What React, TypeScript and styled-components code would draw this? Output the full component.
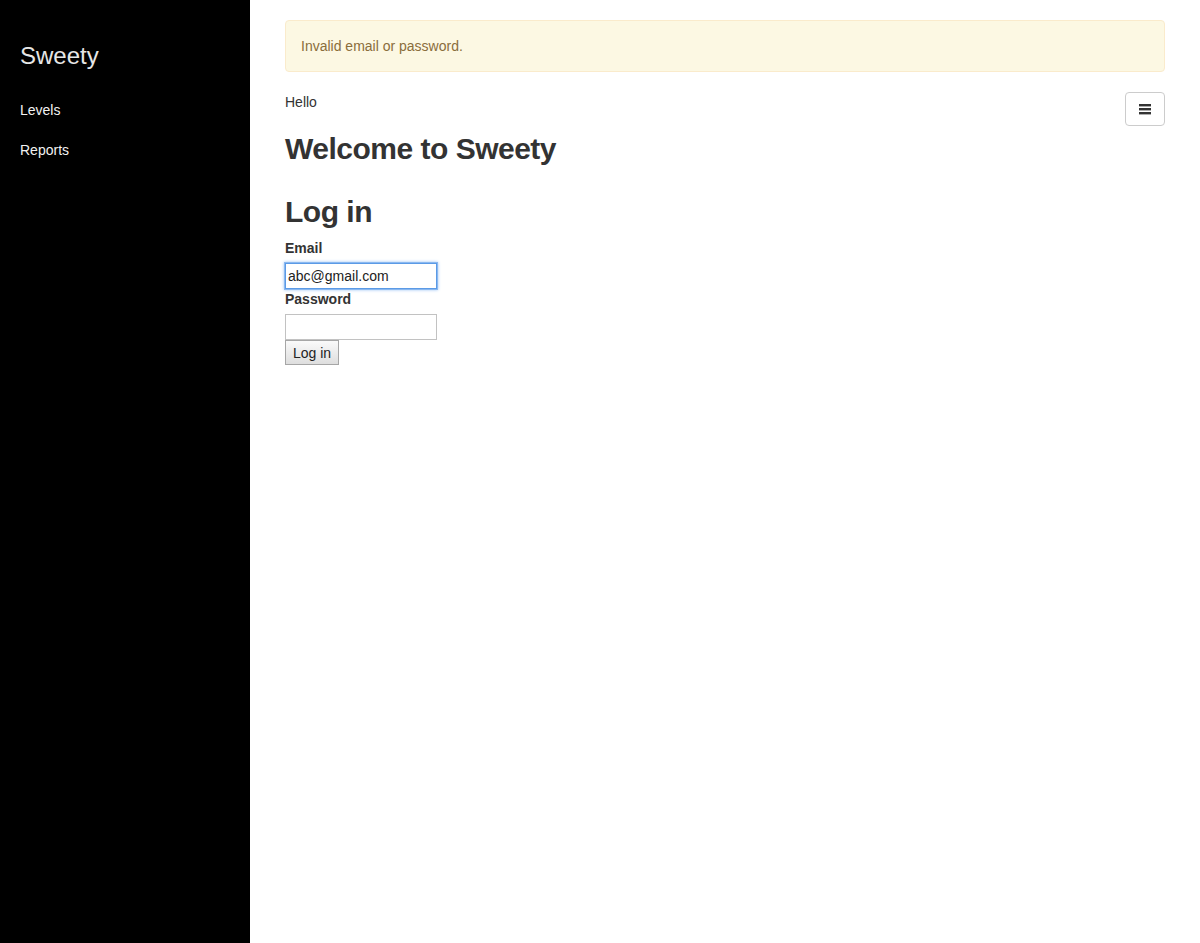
import React from 'react'
import styled, { createGlobalStyle } from 'styled-components'

const GlobalStyle = createGlobalStyle`
  html, body {
    margin: 0;
    padding: 0;
    height: 100%;
  }
  body {
    font-family: "Liberation Sans", Arial, sans-serif;
    font-size: 14px;
    line-height: 20px;
    color: #333;
    background: #fff;
  }
  #root {
    height: 100%;
  }
`

const Layout = styled.div`
  display: flex;
  min-height: 943px;
`

const Sidebar = styled.nav`
  width: 250px;
  flex-shrink: 0;
  background-color: #000;
  padding: 41px 20px 0;
  box-sizing: border-box;
`

const Brand = styled.div`
  font-size: 24px;
  line-height: 30px;
  color: #e6e6e6;
  margin-bottom: 19px;
`

const NavLink = styled.a`
  display: block;
  padding: 10px 0;
  color: #f2f2f2;
  text-decoration: none;
  font-size: 14px;
  line-height: 20px;
`

const Main = styled.main`
  flex: 1;
  padding: 20px 35px;
`

const Alert = styled.div`
  padding: 15px;
  margin-bottom: 20px;
  border: 1px solid #faebcc;
  border-radius: 4px;
  background-color: #fcf8e3;
  color: #8a6d3b;
`

const MenuButton = styled.button`
  float: right;
  display: flex;
  align-items: center;
  justify-content: center;
  width: 40px;
  height: 34px;
  padding: 0;
  background: #fff;
  border: 1px solid #ccc;
  border-radius: 4px;
  color: #333;
`

const Section = styled.section`
  display: flow-root;
`

const Heading = styled.h2`
  font-size: 30px;
  font-weight: bold;
  letter-spacing: -0.5px;
  line-height: 33px;
  margin: 20px 0 10px;
  color: #333;
`

const Form = styled.form`
  display: flex;
  flex-direction: column;
  align-items: flex-start;
`

const Label = styled.label`
  font-weight: bold;
  margin-bottom: 5px;
`

const Input = styled.input<{ $focused?: boolean }>`
  width: 152px;
  height: 26px;
  box-sizing: border-box;
  padding: 1px 2px;
  font-family: inherit;
  font-size: 14px;
  line-height: 20px;
  color: #222;
  background: #fff;
  border: 1px solid ${p => (p.$focused ? '#5b9ae6' : '#c2c2c2')};
  border-radius: 0;
  outline: none;
  box-shadow: ${p => (p.$focused ? '0 0 0 1px #8ab8f0, 0 0 3px 1px #9ec5f5' : 'none')};
`

const SubmitButton = styled.button`
  height: 25px;
  padding: 0 7px;
  font-family: inherit;
  font-size: 14px;
  color: #222;
  border: 1px solid #a6a6a6;
  border-radius: 0;
  background: linear-gradient(#fafafa, #dedede);
`

const HamburgerIcon = () => (
  <svg width="12" height="12" viewBox="0 0 12 12" fill="#333">
    <rect x="0" y="1" width="12" height="2.4" />
    <rect x="0" y="5" width="12" height="2.4" />
    <rect x="0" y="9" width="12" height="2.4" />
  </svg>
)

const App = () => {
  return (
    <>
      <GlobalStyle />
      <Layout>
        <Sidebar>
          <Brand>Sweety</Brand>
          <NavLink href="#">Levels</NavLink>
          <NavLink href="#">Reports</NavLink>
        </Sidebar>

        <Main>
          <Alert>Invalid email or password.</Alert>
          <MenuButton type="button">
            <HamburgerIcon />
          </MenuButton>
          <Section>
            <div>Hello</div>
            <Heading>Welcome to Sweety</Heading>
          </Section>

          <Section>
            <Heading>Log in</Heading>
            <Form onSubmit={e => e.preventDefault()}>
              <Label htmlFor="email">Email</Label>
              <Input id="email" type="email" defaultValue="abc@gmail.com" $focused />
              <Label htmlFor="password">Password</Label>
              <Input id="password" type="password" />
              <SubmitButton type="submit">Log in</SubmitButton>
            </Form>
          </Section>
        </Main>
      </Layout>
    </>
  )
}

export default App
